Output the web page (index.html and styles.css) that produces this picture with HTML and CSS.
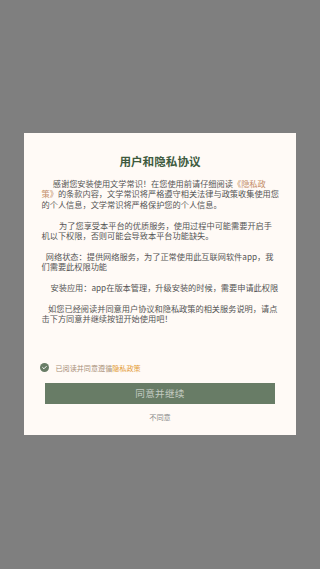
FILE: index.html
```html
<!DOCTYPE html>
<html lang="zh">
<head>
<meta charset="utf-8">
<link rel="stylesheet" href="styles.css">
</head>
<body>
<div class="overlay">
  <div class="dialog">
    <h1 class="title">用户和隐私协议</h1>
    <div class="content">
      <p class="para ind-a">感谢您安装使用文学常识！在您使用前请仔细阅读<span class="link">《隐私政</span><br><span class="link">策》</span>的条款内容，文学常识将严格遵守相关法律与政策收集使用您<br>的个人信息，文学常识将严格保护您的个人信息。</p>
      <p class="para ind-b">为了您享受本平台的优质服务，使用过程中可能需要开启手<br>机以下权限，否则可能会导致本平台功能缺失。</p>
      <p class="para ind-c">网络状态：提供网络服务，为了正常使用此互联网软件app，我<br>们需要此权限功能</p>
      <p class="para ind-d">安装应用：app在版本管理，升级安装的时候，需要申请此权限</p>
      <p class="para ind-e">如您已经阅读并同意用户协议和隐私政策的相关服务说明，请点<br>击下方同意并继续按钮开始使用吧！</p>
    </div>
    <div class="agree-row">
      <span class="check">
        <svg viewBox="0 0 10 10" width="9" height="9"><circle cx="5" cy="5" r="5" fill="#687c66"/><path d="M3 5.1 L4.4 6.4 L7 3.8" fill="none" stroke="#fff" stroke-width="1.1" stroke-linecap="round" stroke-linejoin="round"/></svg>
      </span>
      <span class="agree-text">已阅读并同意遵循<span class="policy">隐私政策</span></span>
    </div>
    <div class="btn">同意并继续</div>
    <div class="refuse">不同意</div>
  </div>
</div>
</body>
</html>
```
FILE: styles.css
```css
* { box-sizing: border-box; }
html, body {
  margin: 0;
  padding: 0;
  width: 320px;
  height: 569px;
  overflow: hidden;
  font-family: "Noto Sans CJK SC", "Noto Sans", sans-serif;
}
.overlay {
  width: 320px;
  height: 569px;
  background: #7f7f7f;
  padding-top: 133px;
  padding-left: 24px;
}
.dialog {
  width: 272px;
  height: 302px;
  background: #fffaf6;
  padding-top: 19px;
  display: flex;
  flex-direction: column;
}
.title {
  margin: 0;
  font-size: 11.6px;
  line-height: 18px;
  font-weight: 700;
  color: #3e5a3e;
  text-align: center;
}
.content {
  margin-top: 8px;
  padding: 0 10px 0 17.5px;
  font-size: 8.2px;
  line-height: 10.4px;
  color: #555555;
  white-space: nowrap;
}
.para {
  margin: 0 0 10.4px 0;
}
.para:last-child { margin-bottom: 0; }
.ind-a { text-indent: 11.3px; }
.ind-b { text-indent: 17.6px; }
.ind-c { text-indent: 4.3px; }
.ind-d { text-indent: 9px; }
.ind-e { text-indent: 6.6px; }
.link { color: #c48e68; }
.agree-row {
  margin-top: 39px;
  padding-left: 16px;
  display: flex;
  align-items: center;
  height: 10px;
}
.check {
  display: flex;
  width: 9px;
  height: 9px;
}
.agree-text {
  margin-left: 6.5px;
  font-size: 7.1px;
  line-height: 10px;
  color: #a88f77;
}
.policy { color: #e39a35; }
.btn {
  margin: 10px 21px 0 21px;
  height: 21px;
  background: #687c66;
  color: #c3cbc1;
  font-size: 9.6px;
  line-height: 21px;
  text-align: center;
  letter-spacing: 0.3px;
}
.refuse {
  margin-top: 8px;
  text-align: center;
  font-size: 7.2px;
  line-height: 10px;
  color: #8a8a8a;
}
```
